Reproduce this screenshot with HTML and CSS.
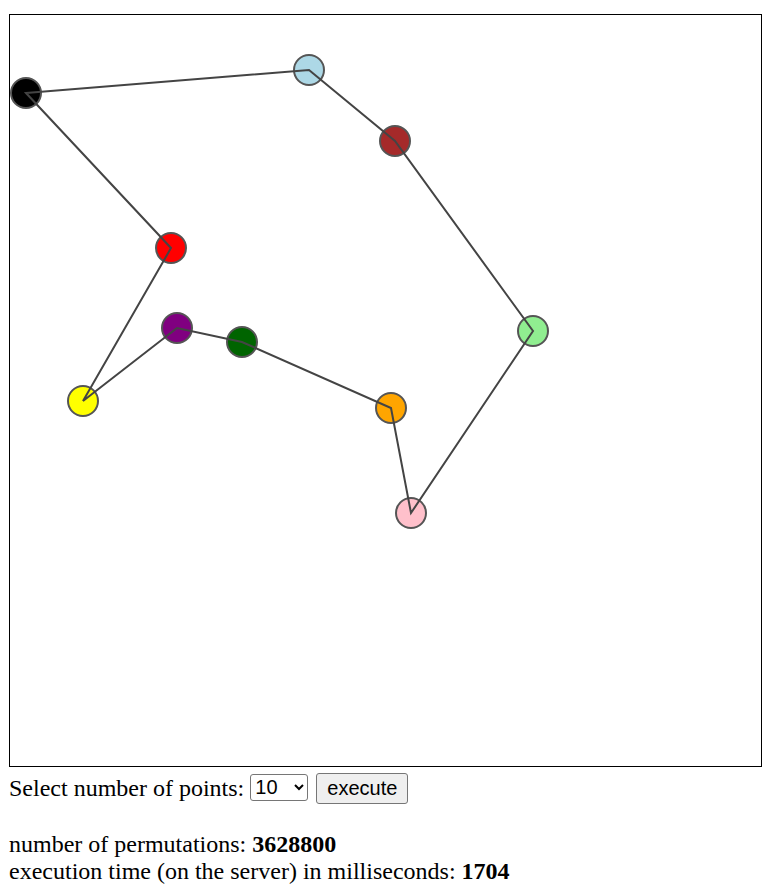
FILE: index.html
```html
<!DOCTYPE html>
<html lang="en">
<head>
    <meta charset="UTF-8">
    <meta name="viewport" content="width=device-width, initial-scale=1.0">
    <title>Travelling Salesman</title>
    <link rel="stylesheet" href="styles.css">
</head>
<body>
    <svg class="board" width="751" height="751" viewBox="0 0 751 751">
        <!-- points, in route order -->
        <circle class="point" cx="16" cy="78" r="15" fill="black"/>
        <circle class="point" cx="299" cy="55" r="15" fill="lightblue"/>
        <circle class="point" cx="385" cy="126" r="15" fill="brown"/>
        <circle class="point" cx="523" cy="316" r="15" fill="lightgreen"/>
        <circle class="point" cx="401" cy="498" r="15" fill="pink"/>
        <circle class="point" cx="381" cy="393" r="15" fill="orange"/>
        <circle class="point" cx="232" cy="327" r="15" fill="darkgreen"/>
        <circle class="point" cx="167" cy="313" r="15" fill="purple"/>
        <circle class="point" cx="73" cy="386" r="15" fill="yellow"/>
        <circle class="point" cx="161" cy="233" r="15" fill="red"/>
        <polygon class="route" points="16,78 299,55 385,126 523,316 401,498 381,393 232,327 167,313 73,386 161,233"/>
    </svg>

    <div class="controls">
        <label for="numPoints">Select number of points:</label>
        <select id="numPoints" name="numPoints">
            <option value="5">5</option>
            <option value="6">6</option>
            <option value="7">7</option>
            <option value="8">8</option>
            <option value="9">9</option>
            <option value="10" selected>10</option>
        </select>
        <button type="button" id="execute">execute</button>
    </div>
    <br>
    <div id="result">
        number of permutations: <b>3628800</b><br>
        execution time (on the server) in milliseconds: <b>1704</b>
    </div>
</body>
</html>
```

FILE: styles.css
```css
body {
    font-family: "Liberation Serif", "Times New Roman", serif;
    font-size: 24px;
    margin: 0;
    padding: 14px 9px 0 9px;
}
.board {
    display: block;
    border: 1px solid black;
}
.point {
    stroke: #555;
    stroke-width: 2;
}
.route {
    fill: none;
    stroke: #444;
    stroke-width: 2;
}
.controls {
    margin-top: 6px;
}
select {
    font-family: "Liberation Sans", Arial, sans-serif;
    font-size: 20px;
    height: 27px;
    width: 58px;
    border: 1px solid #767676;
    border-radius: 3px;
    background: white;
    vertical-align: 2px;
}
button {
    font-family: "Liberation Sans", Arial, sans-serif;
    font-size: 20px;
    height: 31px;
    padding: 0 10px;
    margin-left: 2px;
    border: 1px solid #767676;
    border-radius: 3px;
    background-color: #efefef;
    color: black;
    vertical-align: 1px;
}
```
